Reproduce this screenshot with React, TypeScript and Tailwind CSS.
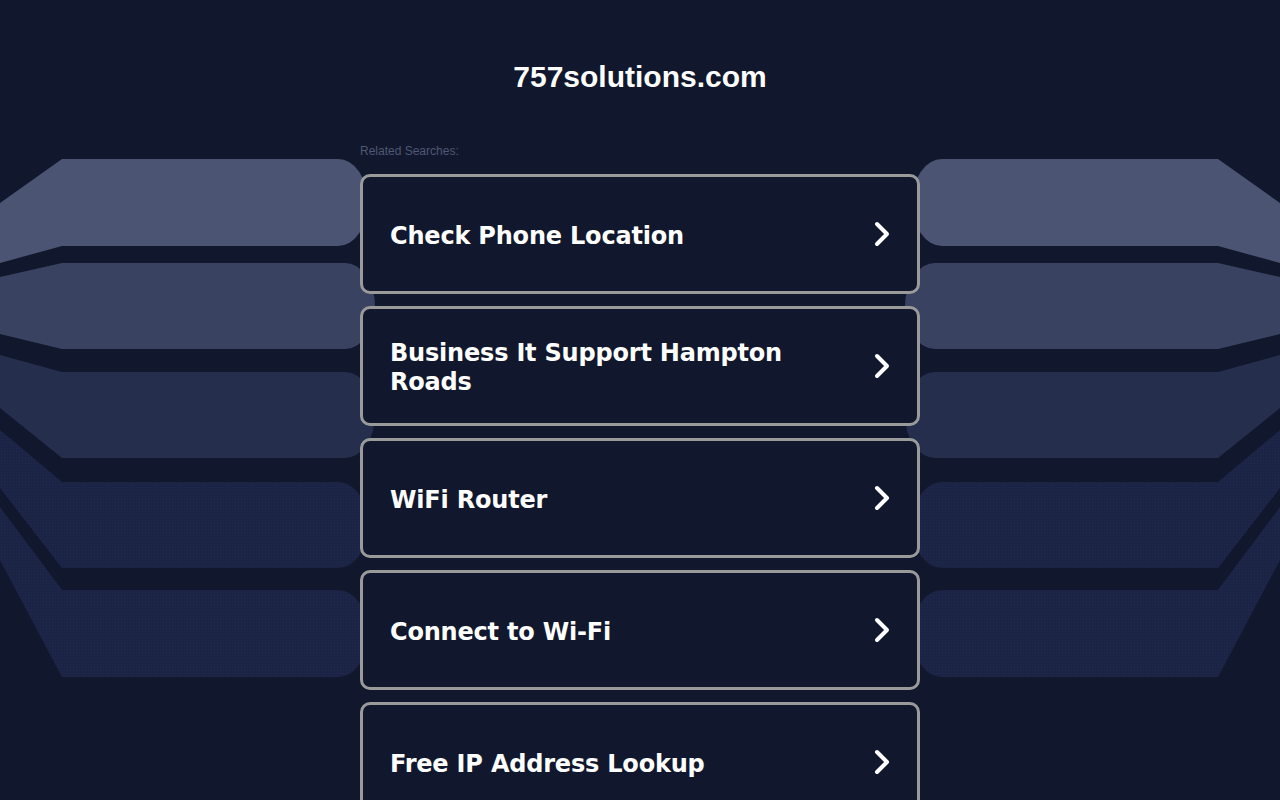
import React from "react";

// 관련 검색어 목록 — 카드 하나당 한 줄 (혹은 두 줄)
const SEARCHES = [
  "Check Phone Location",
  "Business It Support Hampton Roads",
  "WiFi Router",
  "Connect to Wi-Fi",
  "Free IP Address Lookup",
];

/** 양옆 배경 띠 — 왼쪽만 그리고 오른쪽은 좌우 반전 */
const BANDS = [
  { d: "M0,203 L62,159 L338,159 A30,43.5 0 0 1 338,246 L62,246 L0,263 Z", fill: "#4b5573" },
  { d: "M0,277 L62,263 L345,263 A30,43 0 0 1 345,349 L62,349 L0,334 Z", fill: "#3a4262" },
  { d: "M0,355 L62,372 L345,372 A30,43 0 0 1 345,458 L62,458 L0,408 Z", fill: "#262e4e" },
  { d: "M0,430 L62,482 L338,482 A30,43 0 0 1 338,568 L62,568 L0,488 Z", fill: "url(#dots)" },
  { d: "M0,507 L62,590 L338,590 A30,43.5 0 0 1 338,677 L62,677 L0,560 Z", fill: "url(#dots)" },
];

function Backdrop() {
  return (
    <svg
      className="pointer-events-none absolute left-0 top-0"
      width="1280"
      height="800"
      viewBox="0 0 1280 800"
    >
      <defs>
        <pattern id="dots" width="3" height="3" patternUnits="userSpaceOnUse">
          <rect width="3" height="3" fill="#1c2446" />
          <rect x="1" y="1" width="1" height="1" fill="#222b4f" />
        </pattern>
      </defs>
      <g>
        {BANDS.map((b, i) => (
          <path key={i} d={b.d} fill={b.fill} />
        ))}
      </g>
      <g transform="translate(1280,0) scale(-1,1)">
        {BANDS.map((b, i) => (
          <path key={i} d={b.d} fill={b.fill} />
        ))}
      </g>
    </svg>
  );
}

function Chevron() {
  return (
    <svg width="16" height="26" viewBox="0 0 16 26" fill="none" className="flex-shrink-0">
      <path
        d="M3 3 L13 13 L3 23"
        stroke="#ffffff"
        strokeWidth="4"
        strokeLinecap="round"
        strokeLinejoin="round"
      />
    </svg>
  );
}

function SearchCard({ label }: { label: string }) {
  return (
    <a
      href="#"
      className="flex h-[120px] items-center justify-between gap-6 rounded-[10px] border-[3px] border-[#9a9a9a] bg-[#11172c] px-[27px]"
    >
      <span
        className="min-w-0 flex-1 pt-[4px] text-[24px] font-bold leading-[29px] tracking-[-0.2px] text-white"
        style={{ fontFamily: '"DejaVu Sans", Verdana, sans-serif' }}
      >
        {label}
      </span>
      <Chevron />
    </a>
  );
}

export default function App() {
  return (
    <div className="relative min-h-[800px] overflow-hidden bg-[#11172c]">
      <Backdrop />
      <div className="relative mx-auto w-[560px] pt-[60px]">
        <h1
          className="text-center text-[30px] font-bold leading-[34px] text-white"
          style={{ fontFamily: '"Liberation Sans", Arial, sans-serif' }}
        >
          757solutions.com
        </h1>
        <p
          className="mt-[49px] text-[12px] leading-[16px] text-[#4f5875]"
          style={{ fontFamily: '"Liberation Sans", Arial, sans-serif' }}
        >
          Related Searches:
        </p>
        <div className="mt-[15px] flex flex-col gap-[12px] pb-10">
          {SEARCHES.map((s) => (
            <SearchCard key={s} label={s} />
          ))}
        </div>
      </div>
    </div>
  );
}
